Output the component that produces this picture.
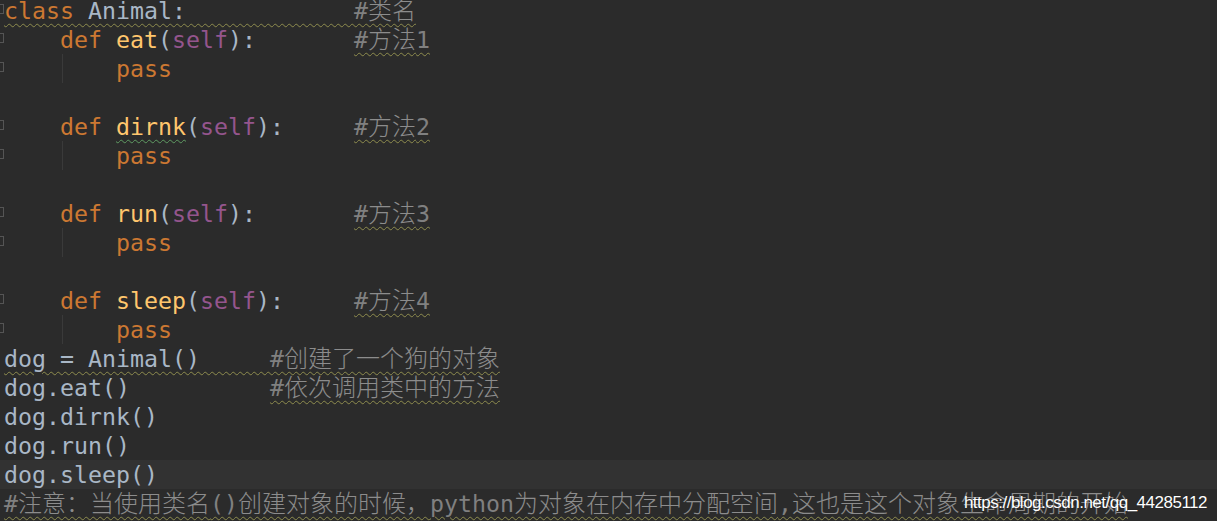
import React from "react";

const kw = "text-[#cc7832]";
const fn = "text-[#ffc66d]";
const slf = "text-[#94558d]";
const cm = "text-[#808080]";
const warn = "underline decoration-wavy decoration-[#8e8c4e] decoration-1 underline-offset-[4px]";
const typo = "underline decoration-wavy decoration-[#5f9b62] decoration-1 underline-offset-[4px]";

type LineProps = {
  children?: React.ReactNode;
  current?: boolean;
  fold?: boolean;
  guide?: boolean;
};

function Line({ children, current, fold, guide }: LineProps) {
  return (
    <div className={`relative h-[29px] whitespace-pre pl-[4px] ${current ? "bg-[#323232]" : ""}`}>
      {fold && <span className="absolute left-[-3px] top-[8px] h-[10px] w-[7px] border border-[#555555]" />}
      {guide && <span className="absolute left-[62px] top-0 h-full w-px bg-[#3a3a3a]" />}
      {children}
    </div>
  );
}

// chinese runs are a touch wider than the mono cell, and drawn thin
function Z({ children }: { children: React.ReactNode }) {
  return <span className="text-[24px] font-extralight text-[#8c8c8c]">{children}</span>;
}

function Def({ name, comment, pad, misspelt }: { name: string; comment: string; pad: string; misspelt?: boolean }) {
  return (
    <Line fold>
      {"    "}
      <span className={kw}>def</span> <span className={`${fn} ${misspelt ? typo : ""}`}>{name}</span>(
      <span className={slf}>self</span>):{pad}
      <span className={`${cm} ${warn}`}>
        #<Z>方法</Z>
        {comment}
      </span>
    </Line>
  );
}

function Pass() {
  return (
    <Line fold guide>
      {"        "}
      <span className={kw}>pass</span>
    </Line>
  );
}

export default function App() {
  return (
    <div className="relative h-[521px] w-[1217px] overflow-hidden bg-[#2b2b2b] font-['DejaVu_Sans_Mono','Noto_Sans_CJK_SC',monospace] text-[23.25px] leading-[29px] text-[#a9b7c6]">
      <div className="-mt-[4px]">
        <Line fold>
          <span className={warn}>
            <span className={kw}>class</span> Animal:{"            "}
            <span className={cm}>
              #<Z>类名</Z>
            </span>
          </span>
        </Line>
        <Def name="eat" comment="1" pad="       " />
        <Pass />
        <Line />
        <Def name="dirnk" comment="2" pad="     " misspelt />
        <Pass />
        <Line />
        <Def name="run" comment="3" pad="       " />
        <Pass />
        <Line />
        <Def name="sleep" comment="4" pad="     " />
        <Pass />
        <Line>
          <span className={warn}>
            dog = Animal(){"     "}
            <span className={cm}>
              #<Z>创建了一个狗的对象</Z>
            </span>
          </span>
        </Line>
        <Line>
          dog.eat(){"          "}
          <span className={`${cm} ${warn}`}>
            #<Z>依次调用类中的方法</Z>
          </span>
        </Line>
        <Line>dog.dirnk()</Line>
        <Line>dog.run()</Line>
        <Line current>dog.sleep()</Line>
        <Line>
          <span className={`${cm} ${warn}`}>
            #<Z>注意：当使用类名</Z>()<Z>创建对象的时候，</Z>python<Z>为对象在内存中分配空间</Z>,<Z>这也是这个对象生命周期的开始</Z>
          </span>
        </Line>
      </div>

      {/* blog watermark */}
      <div className="absolute bottom-[8px] right-[10px] font-['Liberation_Sans',Arial,sans-serif] text-[17px] leading-[20px] tracking-[-0.5px] text-white [text-shadow:0_0_1px_rgba(0,0,0,0.4)]">
        https://blog.csdn.net/qq_44285112
      </div>
    </div>
  );
}
